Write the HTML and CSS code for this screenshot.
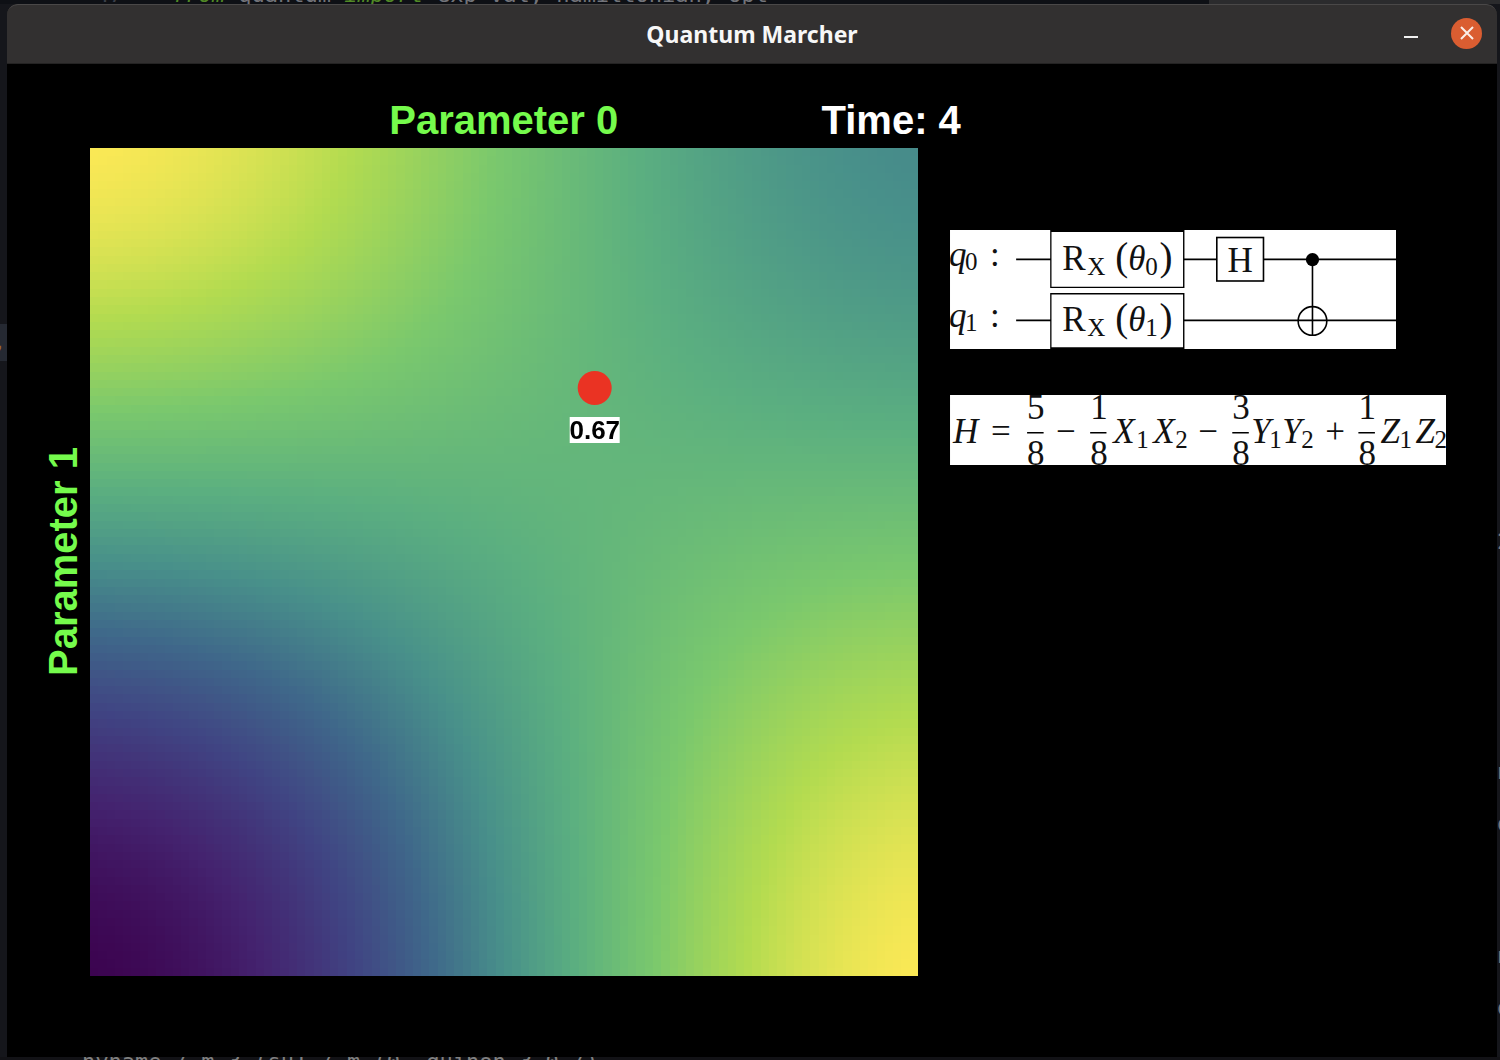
FILE: index.html
```html
<!DOCTYPE html>
<html lang="en">
<head>
<meta charset="utf-8">
<title>Quantum Marcher</title>
<link rel="stylesheet" href="styles.css">
</head>
<body>
<div class="editor-top"><code class="line-number">47</code><code class="code"><i>from</i> quantum <i>import</i> exp_val, hamiltonian, opt</code><span class="panel"></span></div>
<div class="desktop">
  <div class="gutter-left"><span class="current-line">,</span></div>
  <main class="window">
    <header class="titlebar">
      <h1 class="title">Quantum Marcher</h1>
      <div class="controls">
        <button class="control" aria-label="Minimize"><svg width="14" height="14" viewBox="0 0 14 14"><path d="M0 11h14" stroke="#f0f0f0" stroke-width="2"/></svg></button>
        <button class="control close" aria-label="Close"><svg width="14" height="14" viewBox="0 0 14 14"><path d="M1 1l12 12M13 1L1 13" stroke="#fbeee8" stroke-width="2"/></svg></button>
      </div>
    </header>
    <div class="board">
      <h2 class="axis axis-x">Parameter 0</h2>
      <p class="time">Time: 4</p>
      <h2 class="axis axis-y">Parameter 1</h2>
      <div class="field">
        <canvas class="heatmap" width="100" height="100"></canvas>
        <div class="marker"><span class="dot"></span><span class="value">0.67</span></div>
      </div>
      <aside class="side">
        <svg class="circuit" viewBox="0 0 446 119">
          <rect width="446" height="119" fill="#fff"/>
          <g stroke="#000" stroke-width="1.6" fill="none">
            <path d="M66 29.3H446M66 90.2H446M361.8 29V105"/>
            <circle cx="361.8" cy="90.8" r="14.3"/>
          </g>
          <path d="M100 0h134v58h-134zM100 63h134v56h-134z"/>
          <path d="M101.3 2h131.3v54.7h-131.3zM101.3 64.3h131.3v52.7h-131.3z" fill="#fff"/>
          <rect x="266.3" y="7.5" width="46.6" height="43.4" fill="#fff" stroke="#000" stroke-width="1.6"/>
          <circle cx="361.8" cy="29.5" r="6.6"/>
          <g class="math">
            <text x="-1" y="36" class="var">q</text><text x="15" y="40" class="sub">0</text><text x="40" y="36">:</text>
            <text x="112" y="40">R</text><text x="137" y="45" class="sub">X</text><text x="165" y="40" class="paren">(</text><text x="178" y="40" class="var">θ</text><text x="195" y="45" class="sub">0</text><text x="209" y="40" class="paren">)</text>
            <text x="277" y="42">H</text>
            <text x="-1" y="97" class="var">q</text><text x="15" y="101" class="sub">1</text><text x="40" y="97">:</text>
            <text x="112" y="101">R</text><text x="137" y="106" class="sub">X</text><text x="165" y="101" class="paren">(</text><text x="178" y="101" class="var">θ</text><text x="195" y="106" class="sub">1</text><text x="209" y="101" class="paren">)</text>
          </g>
        </svg>
        <svg class="hamiltonian" viewBox="0 0 496 70">
          <rect width="496" height="70" fill="#fff"/>
          <path d="M77 37.7h16.5M140 37.7h16.3M282 37.7h16.5M408 37.7h16.5" stroke="#000" stroke-width="1.5"/>
          <g class="math">
            <text x="3" y="48" class="var">H</text><text x="41" y="48">=</text>
            <text x="77" y="24">5</text><text x="77" y="70">8</text>
            <text x="106" y="48">−</text>
            <text x="140" y="24">1</text><text x="140" y="70">8</text>
            <text x="163" y="48" class="var">X</text><text x="186" y="53" class="sub">1</text>
            <text x="203" y="48" class="var">X</text><text x="225" y="53" class="sub">2</text>
            <text x="248" y="48">−</text>
            <text x="282" y="24">3</text><text x="282" y="70">8</text>
            <text x="301" y="48" class="var">Y</text><text x="319" y="53" class="sub">1</text>
            <text x="332" y="48" class="var">Y</text><text x="351" y="53" class="sub">2</text>
            <text x="375" y="48">+</text>
            <text x="408" y="24">1</text><text x="408" y="70">8</text>
            <text x="430" y="48" class="var">Z</text><text x="449" y="53" class="sub">1</text>
            <text x="465" y="48" class="var">Z</text><text x="484" y="53" class="sub">2</text>
          </g>
        </svg>
      </aside>
    </div>
  </main>
  <div class="gutter-right"><span>2</span><span>-</span><span>n</span><span>-</span><span>o</span><span>n</span><span>-</span><span>o</span></div>
</div>
<div class="editor-bottom"><code>hyname / m 3 (su1 / m (0, quinon 3 0 /)</code></div>
<script src="heatmap.js"></script>
</body>
</html>
```
FILE: styles.css
```css
* { box-sizing: border-box; }

body {
  margin: 0;
  min-height: 100vh;
  display: flex;
  flex-direction: column;
  background: #15161b;
  font-family: "Liberation Sans", Arial, sans-serif;
}

.editor-top {
  display: flex;
  align-items: flex-end;
  height: 4px;
  overflow: hidden;
  background: #0e1015;
  color: #73747a;
}

.editor-top code {
  font: 22px/18px "DejaVu Sans Mono", monospace;
  white-space: pre;
}

.editor-top i { color: #528a26; }
.editor-top .line-number { width: 172px; padding-left: 96px; color: #3a3e48; }
.code { flex: 1; }
.panel { width: 291px; height: 4px; background: #2b2b2d; }

.desktop {
  flex: 1;
  display: grid;
  grid-template-columns: 7px minmax(0, 1fr) 3px;
}

.gutter-left { padding-top: 320px; overflow: hidden; }

.current-line {
  display: block;
  height: 37px;
  background: #252932;
  color: #9c6a20;
  font: 24px/36px "DejaVu Sans Mono", monospace;
  text-indent: -8px;
}

.gutter-right {
  display: flex;
  flex-direction: column;
  justify-content: flex-end;
  overflow: hidden;
  padding-bottom: 36px;
  color: #77777a;
  font: 22px/26px "DejaVu Sans Mono", monospace;
}

.gutter-right span:nth-child(1) { margin-bottom: 76px; }
.gutter-right span:nth-child(2) { margin-bottom: 102px; }
.gutter-right span:nth-child(5) { margin-bottom: 106px; }

.window {
  background: #000;
  border-radius: 11px 11px 0 0;
}

.titlebar {
  display: grid;
  grid-template-columns: 1fr auto 1fr;
  align-items: center;
  height: 60px;
  border-top: 1px solid #4a4848;
  border-bottom: 1px solid #242323;
  border-radius: 11px 11px 0 0;
  background: #323030;
}

.title {
  grid-column: 2;
  margin: 0;
  color: #f7f7f7;
  font: bold 23px/32px "Noto Sans", sans-serif;
}

.controls {
  display: flex;
  justify-content: flex-end;
  gap: 25px;
  padding: 0 15px 2px 0;
}

.control {
  display: grid;
  place-items: center;
  width: 31px;
  height: 31px;
  padding: 0;
  border: 0;
  border-radius: 50%;
  background: none;
}

.close { background: #da5d31; }

.board {
  display: grid;
  grid-template-columns: 48px minmax(0, 5fr) 32px minmax(0, 3fr);
  row-gap: 4px;
  padding: 32px 51px 40px 35px;
}

.axis, .time {
  margin: 0;
  font-size: 40px;
  font-weight: bold;
  line-height: 48px;
}

.axis { color: #75fb4c; }
.axis-x { grid-column: 2; text-align: center; }

.time {
  grid-column: 3 / 5;
  margin-left: -96px;
  color: #fff;
}

.axis-y {
  grid-column: 1;
  place-self: center start;
  line-height: 42px;
  writing-mode: vertical-rl;
  transform: rotate(180deg);
}

.field { position: relative; grid-column: 2; }

.heatmap {
  display: block;
  width: 100%;
  aspect-ratio: 1;
  image-rendering: pixelated;
}

.marker {
  position: absolute;
  left: 61%;
  top: 27%;
  display: flex;
  flex-direction: column;
  align-items: center;
  gap: 12px;
  transform: translateX(-50%);
}

.dot {
  width: 34px;
  height: 34px;
  border-radius: 50%;
  background: #ea3323;
}

.value {
  background: #fff;
  color: #000;
  font-size: 26px;
  font-weight: bold;
  line-height: 26px;
}

.side {
  grid-column: 4;
  display: flex;
  flex-direction: column;
  gap: 46px;
  padding-top: 82px;
}

.circuit { width: 90%; }
.hamiltonian { width: 100%; }

.math {
  font-family: "Liberation Serif", "Times New Roman", serif;
  font-size: 35px;
  fill: #111;
}

.math .var { font-style: italic; }
.math .sub { font-size: 25px; }
.math .paren { font-size: 39px; }

.editor-bottom {
  height: 3px;
  padding-left: 82px;
  overflow: hidden;
  background: #121216;
  color: #808080;
}

.editor-bottom code {
  display: block;
  font: 22px/10px "DejaVu Sans Mono", monospace;
  white-space: pre;
}
```
FILE: heatmap.js
```js
// Energy landscape over the two rotation angles, sampled just inside 0 to pi.
const stops = [
  [60, 4, 80], [68, 35, 111], [64, 68, 131], [63, 104, 138], [72, 144, 138],
  [91, 175, 128], [122, 200, 109], [178, 219, 80], [250, 232, 85]
];

function colour(value) {
  const t = Math.min(Math.max(value, 0), 1) * (stops.length - 1);
  const i = Math.min(Math.floor(t), stops.length - 2);
  return stops[i].map((c, k) => Math.round(c + (stops[i + 1][k] - c) * (t - i)));
}

function wave(step) {
  return Math.cos(Math.PI * (0.05 + 0.9 * step)) / Math.cos(Math.PI * 0.05);
}

const canvas = document.querySelector('.heatmap');
const context = canvas.getContext('2d');
const cells = canvas.width;
for (let row = 0; row < cells; row++) {
  for (let column = 0; column < cells; column++) {
    const a = wave(column / (cells - 1)) + 0.32;
    const b = wave(row / (cells - 1)) - 0.32;
    context.fillStyle = `rgb(${colour(0.66 + 0.379 * a * b)})`;
    context.fillRect(column, row, 1, 1);
  }
}
```
